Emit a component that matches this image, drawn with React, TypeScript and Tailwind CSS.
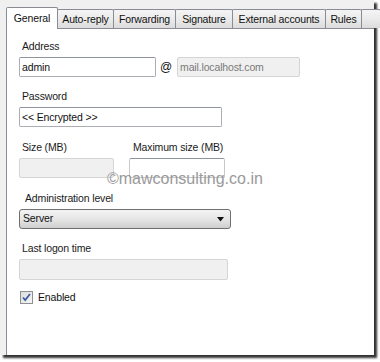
import React from "react";

const tabs = [
  { label: "General", cls: "w-[52px]" },
  { label: "Auto-reply", cls: "w-[57px]" },
  { label: "Forwarding", cls: "w-[63px]" },
  { label: "Signature", cls: "w-[58px]" },
  { label: "External accounts", cls: "w-[94px]" },
  { label: "Rules", cls: "w-[37px]" },
  { label: "", cls: "w-[20px]" },
];

const TextBox = ({
  value,
  className,
  disabled,
}: {
  value?: string;
  className: string;
  disabled?: boolean;
}) => (
  <div
    className={`h-[20px] rounded-[2px] border px-[2px] leading-[18px] ${
      disabled
        ? "border-[#d5d5d5] bg-[#f0f0f0] text-[#7a7a7a]"
        : "border-[#abadb3] border-t-[#8f939c] bg-white text-[#111]"
    } ${className}`}
  >
    {value}
  </div>
);

const Label = ({ text, className = "" }: { text: string; className?: string }) => (
  <div className={`mb-[4px] pl-[3px] leading-[14px] text-[#1a1a1a] ${className}`}>
    {text}
  </div>
);

const App = () => {
  return (
    <div
      className="relative h-[362px] w-[380px] overflow-hidden bg-white text-[10.5px] tracking-[-0.15px]"
      style={{ fontFamily: '"Liberation Sans", Arial, sans-serif' }}
    >
      <div className="flex h-[355px] w-[374px] flex-col bg-[#f0f0f0] pl-[6px] pt-[7px] shadow-[3px_3px_2px_rgba(0,0,0,0.8)]">
        {/* Tabs */}
        <div className="flex h-[21px] items-end">
          {tabs.map((tab, i) =>
            i === 0 ? (
              <div
                key={tab.label}
                className={`relative z-10 -mb-px h-[22px] shrink-0 rounded-t-[2px] border border-b-0 border-[#898c95] bg-white pt-[3px] text-center text-[#111] ${tab.cls}`}
              >
                {tab.label}
              </div>
            ) : (
              <div
                key={i}
                className={`-ml-px h-[19px] shrink-0 rounded-t-[2px] border border-b-0 border-[#898c95] bg-gradient-to-b from-[#f4f4f4] via-[#ebebeb] to-[#dcdcdc] pt-[2px] text-center text-[#111] ${tab.cls}`}
              >
                {tab.label}
              </div>
            )
          )}
        </div>

        {/* Panel */}
        <div className="flex-1 border-l border-t border-[#898c95] bg-white pl-[12px] pt-[10px]">
          <Label text="Address" />
          <div className="flex items-center">
            <TextBox value="admin" className="w-[137px]" />
            <span className="ml-[4px] mr-[5px] text-[12px] text-[#111]">@</span>
            <TextBox value="mail.localhost.com" className="w-[123px]" disabled />
          </div>

          <Label text="Password" className="mt-[12px]" />
          <TextBox value="<< Encrypted >>" className="w-[203px]" />

          <div className="mt-[13px] flex">
            <div>
              <Label text="Size (MB)" />
              <TextBox className="w-[95px]" disabled />
            </div>
            <div className="ml-[15px]">
              <Label text="Maximum size (MB)" className="pl-[4px]" />
              <TextBox className="w-[96px] border-[#c8c8c8]" />
            </div>
          </div>

          <Label text="Administration level" className="mt-[13px] pl-[6px]" />
          <div className="flex h-[20px] w-[212px] items-center justify-between rounded-[3px] border border-[#707070] bg-gradient-to-b from-[#f3f3f3] via-[#e6e6e6] to-[#cfcfcf] pl-[3px] pr-[5px] text-[#111]">
            <span>Server</span>
            <svg width="8" height="5" viewBox="0 0 8 5">
              <path d="M0 0h7L3.5 4.5z" fill="#111" />
            </svg>
          </div>

          <Label text="Last logon time" className="mt-[12px]" />
          <TextBox className="h-[21px] w-[209px]" disabled />

          <div className="mt-[10px] flex items-center pl-[1px]">
            <div className="flex h-[13px] w-[13px] items-center justify-center border border-[#8e8f8f] bg-gradient-to-br from-[#dcdcdc] to-[#f6f6f6]">
              <svg width="9" height="9" viewBox="0 0 9 9">
                <path
                  d="M1 4.5l2.2 2.6L8 1"
                  fill="none"
                  stroke="#3c5aa0"
                  strokeWidth="1.7"
                />
              </svg>
            </div>
            <span className="ml-[5px] text-[#111]">Enabled</span>
          </div>
        </div>
      </div>

      {/* Watermark */}
      <div className="absolute left-[107px] top-[167px] text-[16px] tracking-normal text-[#9a9a9a]">
        ©mawconsulting.co.in
      </div>
    </div>
  );
};

export default App;
